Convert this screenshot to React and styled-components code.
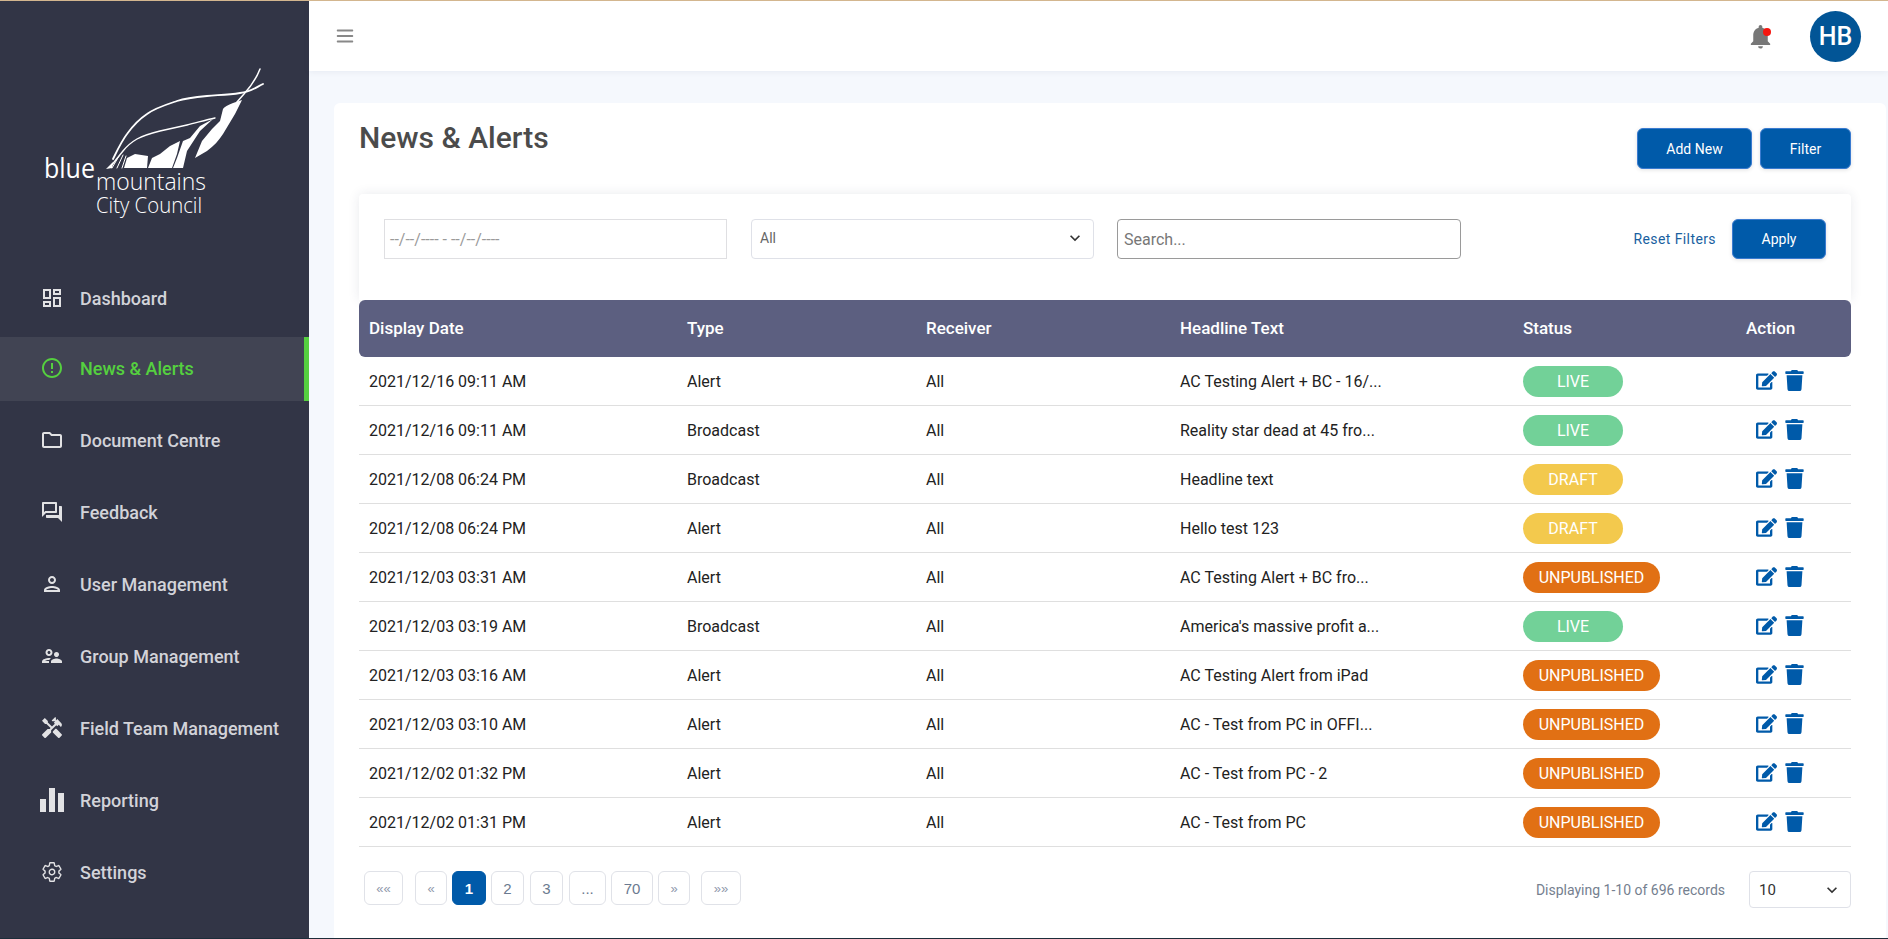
import React from 'react'
import styled, { createGlobalStyle } from 'styled-components'
import { FaEdit, FaTrash } from 'react-icons/fa'
import {
  MdOutlineDashboard, MdErrorOutline, MdOutlineFolder, MdOutlineForum, MdOutlinePerson,
  MdOutlineSupervisorAccount, MdHandyman, MdExpandMore, MdNotifications,
} from 'react-icons/md'
import { IoSettingsOutline } from 'react-icons/io5'
import { HiOutlineMenu } from 'react-icons/hi'

const GlobalStyle = createGlobalStyle`
  html, body { margin: 0; padding: 0; }
  body { font-family: Roboto, "Liberation Sans", sans-serif; background: #f5f8fd; overflow: hidden; }
  * { box-sizing: border-box; }
`

const Page = styled.div`
  width: 1888px;
  height: 939px;
  display: flex;
  flex-direction: column;
  overflow: hidden;
  border-top: 1px solid #d3b68f;
  border-bottom: 1px solid #1d2d3a;
`

const Body = styled.div`
  flex: 1;
  display: flex;
  min-height: 0;
`

const Sidebar = styled.aside`
  width: 309px;
  flex-shrink: 0;
  background: #323546;
`

const LogoSvg = styled.svg`
  display: block;
  width: 309px;
  height: 264px;
`

const NavList = styled.nav`
  display: flex;
  flex-direction: column;
  gap: 8px;
`

const NavItem = styled.a`
  height: 64px;
  display: flex;
  align-items: center;
  padding-bottom: 2px;
  color: ${(p) => (p.$active ? '#55d03f' : '#d2d3d9')};
  background: ${(p) => (p.$active ? '#414453' : 'transparent')};
  border-right: 5px solid ${(p) => (p.$active ? '#55d03f' : 'transparent')};
  font-size: 18px;
  font-weight: 500;
  &:first-child { padding-top: 4px; }
`

const NavIcon = styled.span`
  width: 80px;
  padding: 0 16px 0 40px;
  flex-shrink: 0;
  display: flex;
  justify-content: center;
  color: ${(p) => (p.$active ? '#55d03f' : '#e2e2e4')};
  font-size: ${(p) => p.$size || 24}px;
`

const BarsIcon = () => (
  <svg width="24" height="24" viewBox="0 0 24 24" fill="#e2e2e4">
    <rect x="0" y="11" width="6" height="13" />
    <rect x="9" y="0" width="6" height="24" />
    <rect x="18" y="5" width="6" height="19" />
  </svg>
)

const Main = styled.main`
  flex: 1;
  min-width: 0;
  display: flex;
  flex-direction: column;
`

const TopBar = styled.header`
  height: 70px;
  flex-shrink: 0;
  background: #fff;
  box-shadow: 0 1px 6px rgba(60, 80, 120, 0.08);
  display: flex;
  align-items: center;
  padding: 0 27px 0 25px;
`

const MenuButton = styled.span`
  display: flex;
  font-size: 22px;
  color: #888;
`

const BellWrap = styled.span`
  position: relative;
  margin-left: auto;
  margin-right: 35px;
  display: flex;
  font-size: 29px;
  color: #777;
`

const BellDot = styled.i`
  position: absolute;
  top: 6px;
  right: 4px;
  width: 8px;
  height: 8px;
  border-radius: 50%;
  background: #f5160f;
`

const Avatar = styled.div`
  width: 51px;
  height: 51px;
  border-radius: 50%;
  background: #025596;
  color: #fff;
  font-size: 25px;
  font-weight: 500;
  display: flex;
  align-items: center;
  justify-content: center;
`

const Content = styled.div`
  flex: 1;
  min-height: 0;
  padding: 32px 2px 0 25px;
`

const Card = styled.section`
  height: 100%;
  background: #fff;
  border-radius: 6px 6px 0 0;
  padding: 0 35px 0 25px;
`

const CardHead = styled.div`
  height: 91px;
  display: flex;
  align-items: flex-start;
  justify-content: space-between;
`

const Title = styled.h1`
  margin: 15px 0 0;
  font-size: 30px;
  line-height: 40px;
  font-weight: 500;
  color: #4b4b4b;
`

const HeadActions = styled.div`
  display: flex;
  gap: 8px;
  padding-top: 25px;
`

const Button = styled.button`
  width: ${(p) => p.$w}px;
  height: ${(p) => p.$h || 41}px;
  background: #005aa9;
  color: #fff;
  border: 1px solid #3a7bd0;
  border-radius: 6px;
  font-family: inherit;
  font-size: 14px;
  font-weight: 400;
  box-shadow: 0 1px 4px rgba(0, 0, 0, 0.12);
`

const FilterCard = styled.div`
  height: 106px;
  background: #fff;
  border-radius: 4px 4px 0 0;
  box-shadow: 0 0 12px rgba(40, 50, 80, 0.1);
  padding: 25px 25px 0;
  display: flex;
  align-items: flex-start;
`

const DateBox = styled.div`
  width: 343px;
  height: 40px;
  border: 1px solid #dfdfe2;
  display: flex;
  align-items: center;
  padding-left: 5px;
  color: #9a9a9a;
  font-size: 16px;
  margin-right: 24px;
`

const SelectBox = styled.div`
  width: ${(p) => p.$w}px;
  height: ${(p) => p.$h}px;
  border: 1px solid #dfe1e8;
  border-radius: 4px;
  display: flex;
  align-items: center;
  justify-content: space-between;
  padding: 0 ${(p) => p.$pad}px ${(p) => p.$lift || 0}px ${(p) => p.$left}px;
  font-size: ${(p) => p.$font}px;
  color: ${(p) => p.$color};
  margin-right: ${(p) => p.$gap || 0}px;
  svg { font-size: 20px; color: #333; }
`

const SearchBox = styled.div`
  width: 344px;
  height: 40px;
  border: 1px solid #9a9a9a;
  border-radius: 4px;
  display: flex;
  align-items: center;
  padding-left: 6px;
  color: #777;
  font-size: 16px;
`

const FilterActions = styled.div`
  margin-left: auto;
  display: flex;
  align-items: center;
  gap: 16px;
`

const ResetLink = styled.a`
  color: #1a5f9f;
  font-size: 14px;
  letter-spacing: 0.4px;
`

const columns = '318px 239px 254px 343px 223px 115px'

const TableHead = styled.div`
  height: 57px;
  padding-bottom: 2px;
  display: grid;
  grid-template-columns: ${columns};
  align-items: center;
  background: #5c5f80;
  border-radius: 6px;
  color: #fff;
  font-size: 17px;
  font-weight: 500;
`

const Row = styled.div`
  height: 49px;
  display: grid;
  grid-template-columns: ${columns};
  align-items: center;
  border-bottom: 1px solid #dfdfdf;
  color: #222;
  font-size: 16px;
`

const Cell = styled.div`
  padding-left: 10px;
`

const StatusPill = styled.span`
  display: inline-flex;
  align-items: center;
  justify-content: center;
  height: 31px;
  width: ${(p) => (p.$status === 'UNPUBLISHED' ? 137 : 100)}px;
  border-radius: 16px;
  color: #fff;
  font-size: 16px;
  background: ${(p) =>
    p.$status === 'LIVE' ? '#72d198' : p.$status === 'DRAFT' ? '#f3c94d' : '#e17014'};
`

const ActionCell = styled(Cell)`
  display: flex;
  align-items: center;
  gap: 7px;
  padding: 0 0 2px 20px;
  color: #005aa9;
  font-size: 21px;
  height: 24px;
`

const Footer = styled.div`
  display: flex;
  align-items: flex-start;
  padding: 24px 0 0 5px;
`

const Pager = styled.div`
  display: flex;
  align-items: center;
`

const PageLink = styled.a`
  width: ${(p) => p.$w}px;
  height: 34px;
  margin-right: ${(p) => p.$gap}px;
  display: flex;
  align-items: center;
  justify-content: center;
  border-radius: 6px;
  border: 1px solid ${(p) => (p.$active ? '#005aa9' : '#e0e2e8')};
  background: ${(p) => (p.$active ? '#005aa9' : '#fff')};
  color: ${(p) => (p.$active ? '#fff' : p.$dim ? '#8f99ac' : '#6b7a90')};
  font-family: "Liberation Sans", Roboto, sans-serif;
  font-size: ${(p) => (p.$dim ? 13 : 15)}px;
  font-weight: ${(p) => (p.$active ? 700 : 400)};
`

const Records = styled.div`
  margin-left: auto;
  display: flex;
  align-items: center;
  gap: 24px;
  color: #75808f;
  font-size: 14px;
`

const records = [
  ['2021/12/16 09:11 AM', 'Alert', 'AC Testing Alert + BC - 16/...', 'LIVE'],
  ['2021/12/16 09:11 AM', 'Broadcast', 'Reality star dead at 45 fro...', 'LIVE'],
  ['2021/12/08 06:24 PM', 'Broadcast', 'Headline text', 'DRAFT'],
  ['2021/12/08 06:24 PM', 'Alert', 'Hello test 123', 'DRAFT'],
  ['2021/12/03 03:31 AM', 'Alert', 'AC Testing Alert + BC fro...', 'UNPUBLISHED'],
  ['2021/12/03 03:19 AM', 'Broadcast', "America's massive profit a...", 'LIVE'],
  ['2021/12/03 03:16 AM', 'Alert', 'AC Testing Alert from iPad', 'UNPUBLISHED'],
  ['2021/12/03 03:10 AM', 'Alert', 'AC - Test from PC in OFFI...', 'UNPUBLISHED'],
  ['2021/12/02 01:32 PM', 'Alert', 'AC - Test from PC - 2', 'UNPUBLISHED'],
  ['2021/12/02 01:31 PM', 'Alert', 'AC - Test from PC', 'UNPUBLISHED'],
]

const navItems = [
  { label: 'Dashboard', icon: MdOutlineDashboard },
  { label: 'News & Alerts', icon: MdErrorOutline, active: true },
  { label: 'Document Centre', icon: MdOutlineFolder },
  { label: 'Feedback', icon: MdOutlineForum },
  { label: 'User Management', icon: MdOutlinePerson },
  { label: 'Group Management', icon: MdOutlineSupervisorAccount },
  { label: 'Field Team Management', icon: MdHandyman, size: 26 },
  { label: 'Reporting', icon: BarsIcon },
  { label: 'Settings', icon: IoSettingsOutline, size: 22 },
]

const pages = [
  { t: '««', w: 39, gap: 12, dim: true },
  { t: '«', w: 32, gap: 5, dim: true },
  { t: '1', w: 34, gap: 5, active: true },
  { t: '2', w: 33, gap: 6 },
  { t: '3', w: 33, gap: 6 },
  { t: '...', w: 37, gap: 5 },
  { t: '70', w: 42, gap: 5 },
  { t: '»', w: 32, gap: 11, dim: true },
  { t: '»»', w: 40, gap: 0, dim: true },
]

const Logo = () => (
  <LogoSvg viewBox="0 0 309 264">
    <g fill="none" stroke="#fff" strokeLinecap="round">
      <path d="M260 68 C257 76 252 84 244 93 L237 101" strokeWidth="1.5" />
      <path d="M263 83 C255 87 250 91 240 92 C228 94 218 94 207 95 C196 96 186 97 177 100 C165 104 155 107 147 113 C138 119 132 126 127 133 C121 141 117 150 113 158" strokeWidth="1.8" />
      <path d="M215 117 C205 119 196 122 187 124 C178 126 169 128 160 130 C152 132 144 134 137 138 C130 142 127 145 123 150 C119 155 115 160 111 165" strokeWidth="1.4" />
      <path d="M119 155 L112 167 M123 154 L117 167 M126 155 L122 167" strokeWidth="1" />
    </g>
    <g fill="#fff">
      <path d="M242 99 L233 102 C228 104 224 106 223 108 L220 120 L212 128 L202 140 L195 157 L207 150 C214 145 219 139 223 133 L235 113 Z" />
      <path d="M213 118 L200 125 L190 137 L183 140 L177 157 L173 167 L183 167 L187 150 L200 130 Z" />
      <path d="M180 140 L170 145 L160 153 L152 157 L148 167 L172 167 L177 153 Z" />
      <path d="M127 157 L135 153 L148 155 L147 167 L124 167 Z" />
      <path d="M106 168 L113 161 L112 167 Z" />
    </g>
    <g fill="#fff" fontFamily="'Open Sans', sans-serif" fontWeight="300">
      <text x="44" y="177" fontSize="27" fontWeight="400" textLength="51" lengthAdjust="spacingAndGlyphs">blue</text>
      <text x="96" y="189" fontSize="23" textLength="110" lengthAdjust="spacingAndGlyphs">mountains</text>
      <text x="96" y="212" fontSize="22" textLength="106" lengthAdjust="spacingAndGlyphs">City Council</text>
    </g>
  </LogoSvg>
)

export default function App() {
  return (
    <>
      <GlobalStyle />
      <Page>
        <Body>
          <Sidebar>
            <Logo />
            <NavList>
              {navItems.map(({ label, icon: Icon, active, size }) => (
                <NavItem key={label} $active={active}>
                  <NavIcon $active={active} $size={size}>
                    <Icon />
                  </NavIcon>
                  {label}
                </NavItem>
              ))}
            </NavList>
          </Sidebar>
          <Main>
            <TopBar>
              <MenuButton>
                <HiOutlineMenu />
              </MenuButton>
              <BellWrap>
                <MdNotifications />
                <BellDot />
              </BellWrap>
              <Avatar>HB</Avatar>
            </TopBar>
            <Content>
              <Card>
                <CardHead>
                  <Title>News &amp; Alerts</Title>
                  <HeadActions>
                    <Button $w={115}>Add New</Button>
                    <Button $w={91}>Filter</Button>
                  </HeadActions>
                </CardHead>
                <FilterCard>
                  <DateBox>--/--/---- - --/--/----</DateBox>
                  <SelectBox $w={343} $h={40} $font={14} $color="#666" $gap={23} $pad={8} $left={8} $lift={2}>
                    All
                    <MdExpandMore />
                  </SelectBox>
                  <SearchBox>Search...</SearchBox>
                  <FilterActions>
                    <ResetLink>Reset Filters</ResetLink>
                    <Button $w={94} $h={40}>Apply</Button>
                  </FilterActions>
                </FilterCard>
                <TableHead>
                  <Cell>Display Date</Cell>
                  <Cell>Type</Cell>
                  <Cell>Receiver</Cell>
                  <Cell>Headline Text</Cell>
                  <Cell>Status</Cell>
                  <Cell>Action</Cell>
                </TableHead>
                {records.map(([date, type, headline, status], i) => (
                  <Row key={i}>
                    <Cell>{date}</Cell>
                    <Cell>{type}</Cell>
                    <Cell>All</Cell>
                    <Cell>{headline}</Cell>
                    <Cell>
                      <StatusPill $status={status}>{status}</StatusPill>
                    </Cell>
                    <ActionCell>
                      <FaEdit />
                      <FaTrash />
                    </ActionCell>
                  </Row>
                ))}
                <Footer>
                  <Pager>
                    {pages.map((p) => (
                      <PageLink key={p.t} $w={p.w} $gap={p.gap} $active={p.active} $dim={p.dim}>
                        {p.t}
                      </PageLink>
                    ))}
                  </Pager>
                  <Records>
                    Displaying 1-10 of 696 records
                    <SelectBox $w={102} $h={37} $font={15} $color="#333" $pad={8} $left={9}>
                      10
                      <MdExpandMore />
                    </SelectBox>
                  </Records>
                </Footer>
              </Card>
            </Content>
          </Main>
        </Body>
      </Page>
    </>
  )
}
